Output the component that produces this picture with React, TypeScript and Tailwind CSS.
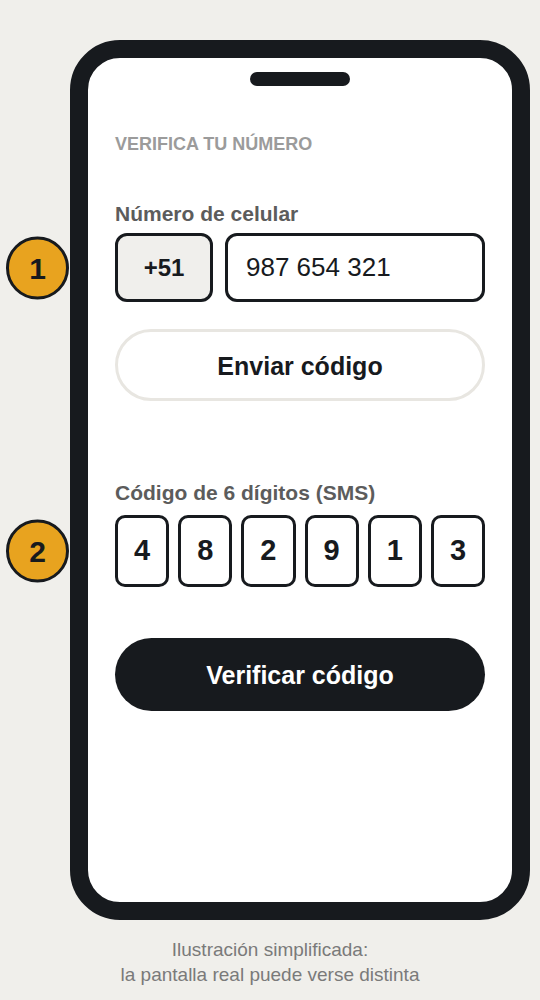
const digits = ["4", "8", "2", "9", "1", "3"];

function StepBadge({ n }: { n: number }) {
  return (
    <div className="absolute left-[-109px] top-1/2 -translate-y-1/2 w-[63px] h-[63px] rounded-full bg-[#e8a31f] border-[3px] border-[#171a1e] flex items-center justify-center text-[30px] font-bold text-[#171a1e]">
      {n}
    </div>
  );
}

export default function App() {
  return (
    <div
      className="min-h-[1000px] w-full bg-[#f0efeb] flex flex-col"
      style={{ fontFamily: '"Liberation Sans", Arial, sans-serif' }}
    >
      {/* Phone frame */}
      <div className="mt-[40px] ml-[70px] w-[460px] h-[880px] rounded-[50px] border-[18px] border-[#171a1e] bg-white flex flex-col">
        <div className="flex justify-center pt-[14px]">
          <div className="w-[100px] h-[14px] rounded-full bg-[#171a1e]" />
        </div>

        <div className="px-[27px] flex flex-col">
          <div className="mt-[48px] text-[18px] leading-[20px] font-bold text-[#9b9b9b]">
            VERIFICA TU NÚMERO
          </div>

          <div className="mt-[49px] text-[21px] leading-[22px] font-bold text-[#5c5c5c]">
            Número de celular
          </div>

          <div className="relative mt-[8px] flex gap-[12px] h-[69px]">
            <StepBadge n={1} />
            <div className="w-[98px] rounded-[12px] border-[3px] border-[#171a1e] bg-[#f0efec] flex items-center justify-center text-[24px] font-bold text-[#171a1e]">
              +51
            </div>
            <div className="flex-1 rounded-[12px] border-[3px] border-[#171a1e] bg-white flex items-center pl-[18px] text-[26px] text-[#171a1e]">
              987 654 321
            </div>
          </div>

          <div className="mt-[27px] h-[72px] pt-[3px] rounded-full border-[3px] border-[#e8e6e1] bg-white flex items-center justify-center text-[25px] font-bold text-[#171a1e]">
            Enviar código
          </div>

          <div className="mt-[81px] text-[21px] leading-[22px] font-bold text-[#5c5c5c]">
            Código de 6 dígitos (SMS)
          </div>

          <div className="relative mt-[11px] flex gap-[9px] h-[72px]">
            <StepBadge n={2} />
            {digits.map((d, i) => (
              <div
                key={i}
                className="flex-1 rounded-[10px] border-[3px] border-[#171a1e] bg-white flex items-center justify-center text-[29px] font-bold text-[#171a1e]"
              >
                {d}
              </div>
            ))}
          </div>

          <div className="mt-[51px] h-[73px] pt-[3px] rounded-full bg-[#171a1e] flex items-center justify-center text-[25px] font-bold text-white">
            Verificar código
          </div>
        </div>
      </div>

      <div className="mt-[17px] text-center text-[19px] leading-[25px] text-[#7a7a7a]">
        Ilustración simplificada:
        <br />
        la pantalla real puede verse distinta
      </div>
    </div>
  );
}
